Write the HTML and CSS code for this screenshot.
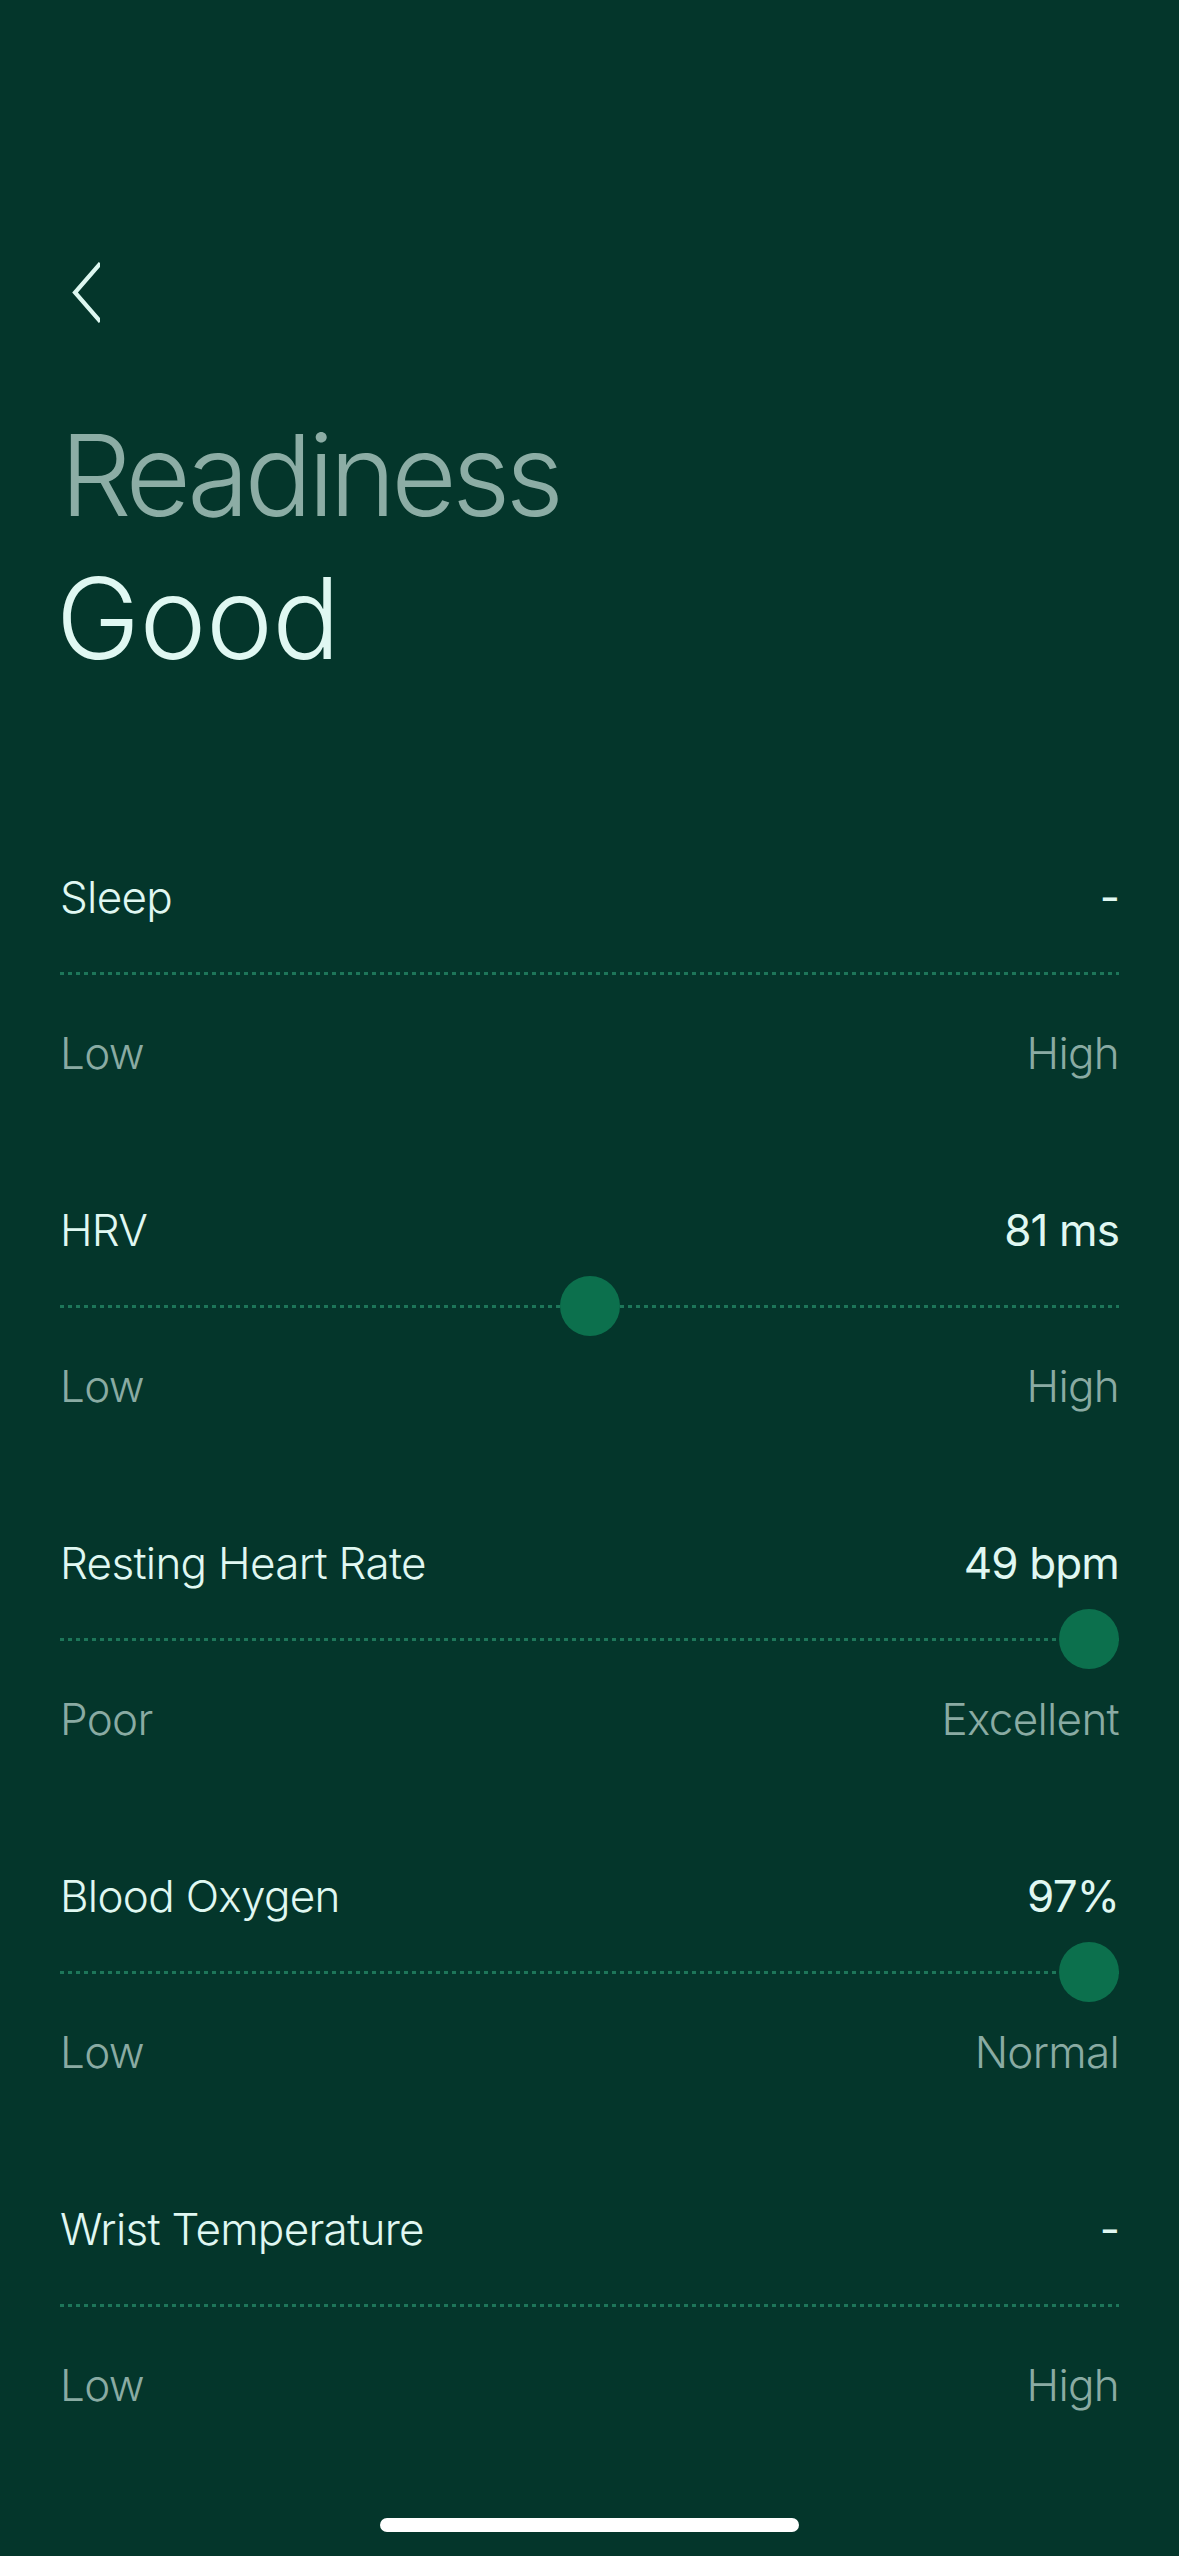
FILE: index.html
```html
<!DOCTYPE html>
<html lang="en">
<head>
<meta charset="utf-8">
<title>Readiness</title>
<link rel="stylesheet" href="styles.css">
</head>
<body>
<main class="page">
  <button class="back" aria-label="Back">
    <svg width="40" height="64" viewBox="0 0 40 64"><path d="M39 4 L15 31.5 L39 59" fill="none" stroke="#DDF7F0" stroke-width="4.2" stroke-linecap="square" stroke-linejoin="miter"/></svg>
  </button>
  <h1 class="title"><span class="title-kicker">Readiness</span><span class="title-value">Good</span></h1>

  <section class="metrics">
    <div class="metric">
      <div class="metric-head"><span class="metric-name">Sleep</span><span class="metric-value">-</span></div>
      <div class="track"></div>
      <div class="metric-range"><span>Low</span><span>High</span></div>
    </div>
    <div class="metric">
      <div class="metric-head"><span class="metric-name">HRV</span><span class="metric-value">81 ms</span></div>
      <div class="track"><span class="knob" style="left: calc((100% - 60px) * 0.5)"></span></div>
      <div class="metric-range"><span>Low</span><span>High</span></div>
    </div>
    <div class="metric">
      <div class="metric-head"><span class="metric-name">Resting Heart Rate</span><span class="metric-value">49 bpm</span></div>
      <div class="track"><span class="knob" style="left: calc((100% - 60px) * 1)"></span></div>
      <div class="metric-range"><span>Poor</span><span>Excellent</span></div>
    </div>
    <div class="metric">
      <div class="metric-head"><span class="metric-name">Blood Oxygen</span><span class="metric-value">97%</span></div>
      <div class="track"><span class="knob" style="left: calc((100% - 60px) * 1)"></span></div>
      <div class="metric-range"><span>Low</span><span>Normal</span></div>
    </div>
    <div class="metric">
      <div class="metric-head"><span class="metric-name">Wrist Temperature</span><span class="metric-value">-</span></div>
      <div class="track"></div>
      <div class="metric-range"><span>Low</span><span>High</span></div>
    </div>
  </section>

  <div class="home-indicator"></div>
</main>
</body>
</html>
```
FILE: styles.css
```css
* { box-sizing: border-box; }
html, body {
  margin: 0;
  padding: 0;
  background: #04362B;
}
body {
  font-family: Inter, "Noto Sans", sans-serif;
  color: #E0F8F2;
}
.page {
  width: 1179px;
  min-height: 2556px;
  padding: 261px 60px 0;
  display: flex;
  flex-direction: column;
}
.back {
  width: 40px;
  height: 64px;
  padding: 0;
  border: 0;
  background: none;
  display: block;
}
.back svg { display: block; }
.title {
  margin: 79px 0 0;
  display: flex;
  flex-direction: column;
  font-weight: 300;
  font-size: 113px;
  line-height: 143px;
}
.title-kicker { color: #8CADA5; letter-spacing: -0.042em; }
.title-value { color: #E0F8F2; margin-left: -4px; letter-spacing: -0.005em; }

.metrics {
  margin-top: 177px;
  display: flex;
  flex-direction: column;
  gap: 117px;
}
.metric {
  display: flex;
  flex-direction: column;
}
.metric-head, .metric-range {
  display: flex;
  justify-content: space-between;
  font-size: 44px;
  line-height: 60px;
  letter-spacing: -0.016em;
}
.metric-name { font-weight: 300; color: #E0F8F2; }
.metric-value { font-weight: 400; color: #E0F8F2; letter-spacing: -0.02em; }
.metric-range {
  margin-top: 20px;
  font-weight: 300;
  color: #8AABA3;
}
.track {
  position: relative;
  margin-top: 16px;
  height: 60px;
}
.track::before {
  content: "";
  position: absolute;
  left: 0;
  right: 0;
  top: 29px;
  height: 3px;
  background: repeating-linear-gradient(to right, #1D7659 0 4px, transparent 4px 8px);
}
.knob {
  position: absolute;
  top: 0;
  width: 60px;
  height: 60px;
  border-radius: 50%;
  background: #0C704D;
}
.home-indicator {
  align-self: center;
  width: 419px;
  height: 14px;
  border-radius: 7px;
  background: #FFFFFF;
  margin-top: 103px;
}
```
